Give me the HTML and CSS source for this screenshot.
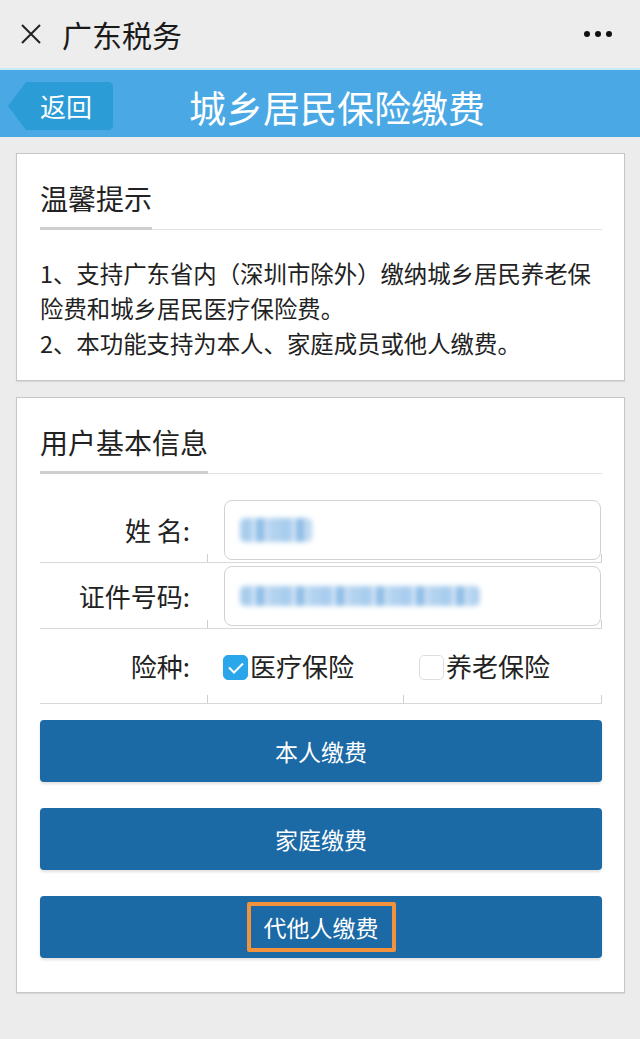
FILE: index.html
```html
<!DOCTYPE html>
<html lang="zh-CN">
<head>
<meta charset="utf-8">
<title>城乡居民保险缴费</title>
<link rel="stylesheet" href="styles.css">
</head>
<body>
<div class="topbar">
  <svg class="close" width="22" height="22" viewBox="0 0 22 22"><path d="M2 2 L20 20 M20 2 L2 20" stroke="#222" stroke-width="2" fill="none"/></svg>
  <span class="app-name">广东税务</span>
  <span class="more"><i></i><i></i><i></i></span>
</div>
<header class="navbar">
  <a class="back">返回</a>
  <h1 class="nav-title">城乡居民保险缴费</h1>
</header>
<main class="content">
  <section class="card">
    <h2 class="card-title"><span>温馨提示</span></h2>
    <div class="tips">
      <p>1、支持广东省内（深圳市除外）缴纳城乡居民养老保险费和城乡居民医疗保险费。</p>
      <p>2、本功能支持为本人、家庭成员或他人缴费。</p>
    </div>
  </section>
  <section class="card">
    <h2 class="card-title"><span>用户基本信息</span></h2>
    <div class="form-row">
      <div class="cell label">姓 名:</div>
      <div class="cell field last"><div class="input"><span class="blur blur-name"></span></div></div>
    </div>
    <div class="form-row">
      <div class="cell label">证件号码:</div>
      <div class="cell field last"><div class="input"><span class="blur blur-id"></span></div></div>
    </div>
    <div class="form-row options">
      <div class="cell label">险种:</div>
      <div class="cell opt"><span class="check on"><svg width="18" height="14" viewBox="0 0 18 14"><path d="M2 6.5 L7 11.5 L16 2.5" stroke="#fff" stroke-width="2" fill="none"/></svg></span>医疗保险</div>
      <div class="cell opt last"><span class="check"></span>养老保险</div>
    </div>
    <div class="buttons">
      <button class="btn">本人缴费</button>
      <button class="btn">家庭缴费</button>
      <button class="btn"><span class="highlight">代他人缴费</span></button>
    </div>
  </section>
</main>
</body>
</html>
```
FILE: styles.css
```css
* { box-sizing: border-box; }
html, body { margin: 0; padding: 0; }
body {
  width: 640px;
  min-height: 1039px;
  background: #ececec;
  font-family: "Noto Sans CJK SC", "Noto Sans", sans-serif;
  color: #222;
}
.topbar {
  height: 68px;
  display: flex;
  align-items: center;
  padding: 0 28px 0 20px;
  background: #ededed;
}
.close { display: block; }
.app-name {
  margin-left: 20px;
  font-size: 30px;
  line-height: 1;
  color: #1a1a1a;
}
.more { margin-left: auto; display: flex; gap: 5px; }
.more i {
  display: block;
  width: 6px; height: 6px;
  border-radius: 50%;
  background: #111;
}
.navbar {
  height: 69px;
  border-top: 2px solid #c7ecf8;
  background: #4aa9e5;
  display: flex;
  align-items: flex-start;
  padding: 12px 0 0 8px;
}
.back {
  display: block;
  width: 105px;
  height: 48px;
  padding-left: 32px;
  background: #2b9cd5;
  color: #fff;
  font-size: 26px;
  line-height: 48px;
  clip-path: polygon(18px 0, 102px 0, 105px 3px, 105px 45px, 102px 48px, 18px 48px, 0 24px);
}
.nav-title {
  margin: 0 0 0 76px;
  font-size: 37px;
  font-weight: normal;
  line-height: 50px;
  color: #fff;
}
.content {
  padding: 16px 15px 0 16px;
  display: flex;
  flex-direction: column;
  gap: 16px;
}
.card {
  background: #fff;
  border: 1px solid #c6c6c6;
  box-shadow: 0 1px 1px rgba(0,0,0,0.08);
  padding: 30px 22px 19px 23px;
}
.card-title {
  margin: 0;
  display: flex;
  border-bottom: 1px solid #e2e2e2;
  font-weight: normal;
}
.card-title span {
  font-size: 28px;
  line-height: 28px;
  padding-bottom: 15px;
  border-bottom: 3px solid #cfcfcf;
  margin-bottom: -1px;
  color: #222;
}
.tips { margin-top: 26px; }
.tips p {
  margin: 0;
  font-size: 23.4px;
  line-height: 35px;
  color: #222;
}
.form-row {
  display: grid;
  grid-template-columns: 167px 1fr;
}
.card-title + .form-row { margin-top: 23px; }
.cell {
  border-bottom: 1px solid #d8d8d8;
}
.label {
  font-size: 26px;
  text-align: right;
  padding-right: 17px;
  display: flex;
  align-items: center;
  justify-content: flex-end;
  color: #222;
}
.field {
  padding: 3px 1px 2px 17px;
  background: linear-gradient(#cfcfcf, #cfcfcf) left bottom / 1px 8px no-repeat;
}
.last {
  background:
    linear-gradient(#cfcfcf, #cfcfcf) left bottom / 1px 8px no-repeat,
    linear-gradient(#cfcfcf, #cfcfcf) right bottom / 1px 8px no-repeat;
}
.input {
  height: 60px;
  border: 1.5px solid #d2d2d2;
  border-radius: 8px;
  display: flex;
  align-items: center;
  padding-left: 15px;
}
.blur {
  display: block;
  height: 22px;
  border-radius: 5px;
  filter: blur(2.5px);
  background: repeating-linear-gradient(90deg, #a9cdee 0 12px, #d6e8f7 12px 16px, #8fbde6 16px 24px, #c4dcf2 24px 30px, #b2d2ef 30px 40px);
}
.blur-name { width: 72px; height: 24px; }
.blur-id { width: 240px; height: 20px; }
.options { grid-template-columns: 167px 196px 1fr; }
.options .cell { height: 75px; padding-top: 24px; }
.options .label { align-items: flex-start; line-height: 26px; }
.opt {
  display: flex;
  align-items: flex-start;
  font-size: 26px;
  line-height: 26px;
  padding-left: 16px;
  background: linear-gradient(#cfcfcf, #cfcfcf) left bottom / 1px 8px no-repeat;
}
.opt.last {
  background:
    linear-gradient(#cfcfcf, #cfcfcf) left bottom / 1px 8px no-repeat,
    linear-gradient(#cfcfcf, #cfcfcf) right bottom / 1px 8px no-repeat;
}
.check {
  width: 25px; height: 25px;
  margin-top: 2px;
  margin-right: 2px;
  border-radius: 5px;
  border: 1.5px solid #dedede;
  background: #fff;
  display: flex;
  align-items: center;
  justify-content: center;
  flex: none;
}
.check.on { background: #2aa6ea; border-color: #2aa6ea; }
.buttons {
  margin-top: 16px;
  display: flex;
  flex-direction: column;
  gap: 26px;
  padding-bottom: 15px;
}
.btn {
  display: flex;
  align-items: center;
  justify-content: center;
  height: 62px;
  width: 100%;
  border: none;
  border-radius: 4px;
  background: #1b69a5;
  box-shadow: 0 2px 3px rgba(0,0,0,0.12);
  color: #fff;
  font-family: "Noto Sans CJK SC", "Noto Sans", sans-serif;
  font-size: 23px;
  padding: 0;
}
.highlight {
  border: 4px solid #f2923c;
  border-radius: 2px;
  padding: 0 13px;
  line-height: 42px;
}
```
